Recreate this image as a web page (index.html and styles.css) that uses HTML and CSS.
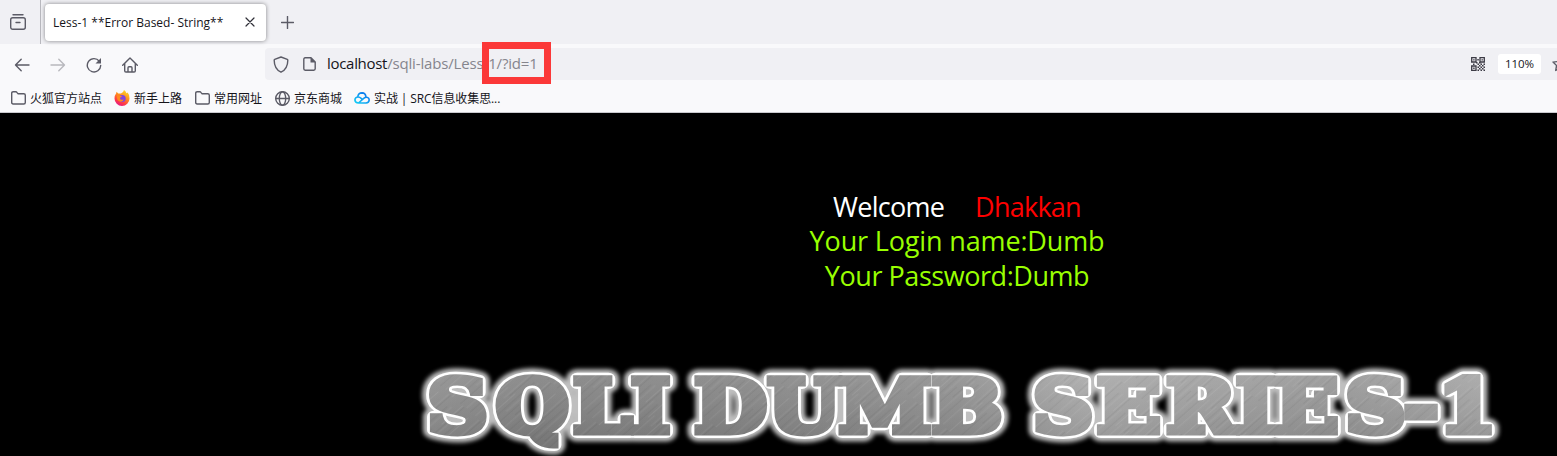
FILE: index.html
```html
<!DOCTYPE html>
<html lang="zh-CN">
<head>
<meta charset="utf-8">
<title>Less-1 **Error Based- String**</title>
<link rel="stylesheet" href="styles.css">
</head>
<body>
<header class="browser">
  <div class="tabs">
    <div class="view">
      <svg class="icon" width="18" height="18" viewBox="0 0 18 18"><path d="M4 1.700h10"/><rect x="1.700" y="4.700" width="14.600" height="11.600" rx="2"/><path d="M7 9.500h4"/></svg>
    </div>
    <div class="tab">
      <span class="tab-title">Less-1 **Error Based- String**</span>
      <svg class="icon dark" width="10" height="10" viewBox="0 0 10 10"><path d="M1 1l8 8M9 1L1 9"/></svg>
    </div>
    <svg class="icon plus" width="13" height="13" viewBox="0 0 13 13"><path d="M6.500.5v12M.5 6.500h12"/></svg>
  </div>
  <div class="toolbar">
    <div class="nav">
      <svg class="icon" width="16" height="16" viewBox="0 0 16 16"><path d="M15 8H1.500M7.200 2.300L1.500 8l5.700 5.700"/></svg>
      <svg class="icon faded" width="16" height="16" viewBox="0 0 16 16"><path d="M1 8h13.500M8.800 2.300L14.500 8l-5.700 5.700"/></svg>
      <svg class="icon" width="16" height="16" viewBox="0 0 16 16"><path d="M13.300 4.200A6.700 6.700 0 1 0 14.700 8.500"/><path class="solid" d="M15 1v5.500H9.500z"/></svg>
      <svg class="icon" width="16" height="16" viewBox="0 0 16 16"><path d="M.7 8.200L8 1l7.300 7.200M2.700 6.500v7.300q0 1.200 1.200 1.200h8.200q1.200 0 1.200-1.200V6.500M6 15v-4.300q0-1 1-1h2q1 0 1 1V15"/></svg>
    </div>
    <div class="address">
      <svg class="icon" width="16" height="17" viewBox="0 0 16 17"><path d="M8 1l6.300 2.400q.5.200.5.800c0 5-1.800 9.600-6.800 12C3 13.800 1.200 9.200 1.200 4.200q0-.6.5-.8z"/></svg>
      <svg class="icon page" width="13" height="14" viewBox="0 0 13 14"><path d="M8 .8H2.200Q.8.8.8 2.200v9.600q0 1.400 1.400 1.400h8.600q1.400 0 1.400-1.400V5z"/><path class="solid" d="M7.500.8v4.700h4.700V5L8 .8z"/></svg>
      <div class="url"><span class="host">localhost</span>/sqli-labs/Less-1/?id=1<span class="mark"></span></div>
      <svg class="qr" width="14" height="14" viewBox="0 0 14 14"><path fill="none" stroke="#3c3b45" stroke-width="1.300" d="M.7.700h4.300v4.300H.7zM9 .7h4.300v4.300H9zM.7 9H5v4.300H.7z"/><path fill="#3c3b45" d="M2.200 2.200h1.400v1.400H2.200zM10.500 2.200h1.400v1.400h-1.400zM2.200 10.500h1.400v1.400H2.200zM6.300 2h1.500v1.500H6.300zM5 5h1.500v1.500H5zM6.500 6.500H8V8H6.500zM8 5h1.500v1.500H8zM2 6.500h1.500V8H2zM9.500 6.500H11V8H9.500zM12.500 6.500H14V8h-1.500zM8 8h1.500v1.500H8zM11 8h1.500v1.500H11zM6.500 9.500H8V11H6.500zM9.500 9.500H11V11H9.500zM12.500 9.500H14V11h-1.500zM8 11h1.500v1.500H8zM11 11h1.500v1.500H11zM6.500 12.500H8V14H6.500zM9.500 12.500H11V14H9.500zM12.500 12.500H14V14h-1.500z"/></svg>
      <span class="zoom">110%</span>
      <svg class="icon star" width="16" height="16" viewBox="0 0 16 16"><path d="M8 1l2.100 4.500 4.900.6-3.600 3.400.9 4.900L8 12l-4.300 2.400.9-4.900L1 6.100l4.900-.6z"/></svg>
    </div>
  </div>
  <nav class="bookmarks">
    <a class="bm b1"><svg class="icon" width="15" height="14" viewBox="0 0 15 14"><path d="M.7 11.500V2.300Q.7.7 2.200.7h2.600q.7 0 1.100.6l1 1.400h5.900q1.500 0 1.500 1.500v7.300q0 1.500-1.500 1.500H2.200Q.7 13 .7 11.500z"/></svg><span>火狐官方站点</span></a>
    <a class="bm b2"><svg width="16" height="16" viewBox="0 0 16 16"><defs><linearGradient id="fox" x1=".8" y1="0" x2=".3" y2="1"><stop offset="0" stop-color="#ffe226"/><stop offset=".45" stop-color="#ff8a1f"/><stop offset=".75" stop-color="#ff3b47"/><stop offset="1" stop-color="#e31587"/></linearGradient></defs><path fill="url(#fox)" d="M10 0q2 1.400 2.500 3.200 1-.2 1-1 2.200 2.600 2 6.300a7.500 7.500 0 0 1-15 0Q.4 5.500 2.200 3.200L2.500 1.800 4.300 3.600 7 3.400Q9.500 2.500 10 0z"/><circle cx="8.200" cy="8.400" r="3.500" fill="#8147dc"/><path fill="#ff8a1f" d="M3 5q2 0 3 .9l2 .2q-.3 1.300-2 1.700-.2 1.800 1.500 2 1.400.1 2.300-.6-.6 2.400-3 2.500Q3.200 11.400 3 8z"/></svg><span>新手上路</span></a>
    <a class="bm b3"><svg class="icon" width="15" height="14" viewBox="0 0 15 14"><path d="M.7 11.500V2.300Q.7.7 2.200.7h2.600q.7 0 1.100.6l1 1.400h5.900q1.500 0 1.500 1.500v7.300q0 1.500-1.500 1.500H2.200Q.7 13 .7 11.500z"/></svg><span>常用网址</span></a>
    <a class="bm b4"><svg class="icon" width="15" height="15" viewBox="0 0 15 15"><circle cx="7.500" cy="7.500" r="6.800"/><ellipse cx="7.500" cy="7.500" rx="3.200" ry="6.800"/><path d="M.7 7.500h13.600"/></svg><span>京东商城</span></a>
    <a class="bm b5"><svg width="16" height="12" viewBox="0 0 16 12"><defs><linearGradient id="cloud" x1="0" x2="1" y1="1" y2="0"><stop offset="0" stop-color="#16d0f5"/><stop offset="1" stop-color="#0967ec"/></linearGradient></defs><path fill="none" stroke="url(#cloud)" stroke-width="1.600" stroke-linecap="round" stroke-linejoin="round" d="M4.500 11l5.500-4.800Q11.500 4.800 13.500 5.400 15.200 6.200 15.200 8q-.2 2.800-3.200 3H4.500Q1 10.800.9 7.900 1.200 5 4 5q1.700 0 3.500 1.700M3.700 5Q4.200.9 8 .9q3.500.1 4 4"/></svg><span>实战 | SRC信息收集思...</span></a>
  </nav>
</header>
<main class="lesson">
  <div class="login">
    <div class="line welcome"><span>Welcome</span><span class="name">Dhakkan</span></div>
    <div class="line user">Your Login name:Dumb</div>
    <div class="line pass">Your Password:Dumb</div>
  </div>
  <svg class="banner" width="1557" height="113" viewBox="0 343 1557 113">
    <defs>
      <linearGradient id="shade" gradientUnits="userSpaceOnUse" x1="373" x2="1307" y1="0" y2="0"><stop offset="0" stop-color="#929292"/><stop offset=".1" stop-color="#858585"/><stop offset=".28" stop-color="#888"/><stop offset=".5" stop-color="#929292"/><stop offset=".62" stop-color="#ababab"/><stop offset=".85" stop-color="#999"/><stop offset="1" stop-color="#a8a8a8"/></linearGradient>
      <linearGradient id="depth" x1="0" x2="0" y1="370" y2="440" gradientUnits="userSpaceOnUse"><stop offset="0" stop-color="#fff" stop-opacity=".08"/><stop offset="1" stop-color="#000" stop-opacity=".1"/></linearGradient>
      <pattern id="metal" patternUnits="userSpaceOnUse" width="1557" height="456"><rect width="1557" height="456" fill="url(#shade)"/><rect width="1557" height="456" fill="url(#depth)"/><rect width="1557" height="456" fill="url(#brush)"/></pattern>
      <pattern id="brush" patternUnits="userSpaceOnUse" width="37" height="71" patternTransform="rotate(45)"><path d="M2 0v40M6 30v41M13 8v40M19 0v26M23 20v50M31 5v30M34 30v40" stroke="#fff" stroke-opacity=".12" stroke-width=".6"/><path d="M4 0v35M10 10v50M16 35v36M21 0v45M28 20v51" stroke="#000" stroke-opacity=".07" stroke-width=".8"/></pattern>
      <filter id="soft" x="-5%" y="-30%" width="110%" height="160%"><feGaussianBlur stdDeviation="1.900"/></filter>
      <g id="words">
        <text y="432.500" x="401.300 467 528.500 570.600">SQLI</text>
        <text y="432.500" x="640.800 705.300 776.300 848.200">DUMB</text>
        <text y="432.500" x="932.500 990 1053.500 1101.300 1146 1206.600 1246.500 1287">SERIES-1</text>
      </g>
    </defs>
    <g transform="scale(1.14 1)">
      <use href="#words" class="halo"/>
      <use href="#words" class="rim"/>
      <use href="#words" class="face"/>
    </g>
  </svg>
</main>
</body>
</html>
```
FILE: styles.css
```css
* { box-sizing: border-box; }
body { margin: 0; width: 1557px; height: 456px; overflow: hidden; background: #000; font-family: "Open Sans", "Noto Sans CJK SC", sans-serif; color: #15141a; }
svg { flex: none; display: block; }
.icon { fill: none; stroke: #5b5b66; stroke-width: 1.4; stroke-linecap: round; stroke-linejoin: round; }
.icon .solid { fill: #5b5b66; stroke: none; }
.dark { stroke: #303038; stroke-width: 1.2; }
.faded { stroke: #b8b8bd; }
.browser { height: 113px; background: #f9f9fb; border-bottom: 1px solid #c9c9ce; }
.tabs { height: 44px; background: #f0f0f4; display: flex; align-items: center; }
.view { width: 41px; height: 44px; border-right: 1px solid #b8b8be; padding: 13px 0 0 9px; }
.tab { width: 221px; height: 37px; margin-left: 4px; border-radius: 4px; background: #fff; box-shadow: 0 0 4px rgba(0,0,0,.45); padding: 0 11px 0 8px; display: flex; align-items: center; justify-content: space-between; font-size: 12px; }
.tab-title { white-space: nowrap; }
.plus { margin-left: 15px; }
.toolbar { height: 40px; display: flex; padding-left: 14px; align-items: center; }
.nav { display: flex; gap: 20px; width: 251px; padding-top: 1px; }
.address { width: 1292px; height: 32px; flex: none; border-radius: 4px 0 0 4px; background: #f0f0f4; display: flex; align-items: center; padding-left: 8px; }
.page { margin-left: 14px; }
.url { position: relative; flex: none; width: 1155px; padding: 0 0 2px 11px; font-size: 15px; letter-spacing: -.16px; color: #85858d; white-space: nowrap; }
.host { color: #15141a; letter-spacing: -.3px; }
.mark { position: absolute; left: 166px; top: -11px; width: 69px; height: 42px; border: 7px solid #fb3838; }
.zoom { flex: none; width: 43px; height: 20px; margin-left: 13px; border-radius: 3px; background: #fff; font-size: 11.5px; line-height: 20px; text-align: center; }
.star { margin-left: 11px; }
.bookmarks { height: 28px; display: flex; align-items: center; padding-left: 11px; font-size: 12px; }
.bm { display: flex; align-items: center; gap: 4px; white-space: nowrap; flex: none; }
.b1 { width: 103px; }
.b2 { width: 81px; }
.b3 { width: 80px; }
.b4 { width: 79px; }
.b5 { letter-spacing: -.1px; }
.lesson { height: 343px; background: #000; }
.login { height: 230px; margin-left: 357px; width: 1200px; padding-top: 76px; font-size: 27px; line-height: 35px; text-align: center; color: #99ff00; }
.line { white-space: nowrap; }
.welcome { display: flex; justify-content: center; gap: 31px; height: 34px; color: #fff; letter-spacing: -.75px; }
.name { color: #f00; }
.user { letter-spacing: -.15px; }
.pass { letter-spacing: -.45px; }
.banner text { font-family: "DejaVu Serif", serif; font-weight: 700; font-size: 73px; text-anchor: middle; }
.halo { fill: #fff; stroke: #fff; stroke-width: 19px; stroke-linejoin: round; filter: url(#soft); opacity: .75; }
.rim { fill: #fff; stroke: #fff; stroke-width: 12px; stroke-linejoin: round; }
.face { fill: url(#metal); stroke: url(#metal); stroke-width: 7px; }
```
